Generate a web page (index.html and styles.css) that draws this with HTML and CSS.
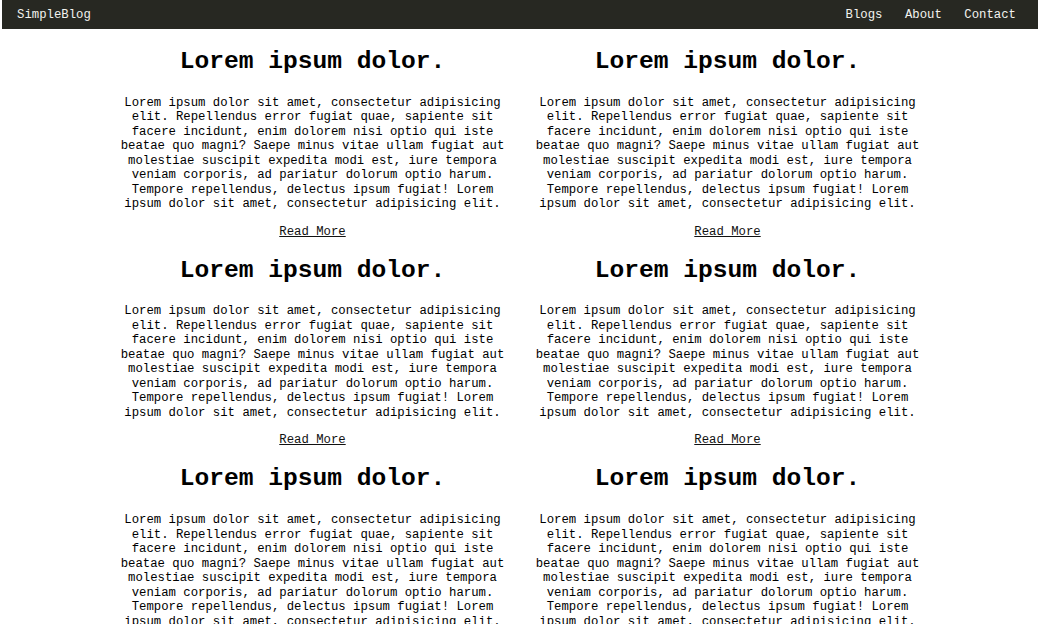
FILE: index.html
```html
<!DOCTYPE html>
<html lang="en">
<head>
<meta charset="utf-8">
<title>SimpleBlog</title>
<link rel="stylesheet" href="styles.css">
</head>
<body>
<nav class="navbar">
  <a class="brand" href="#">SimpleBlog</a>
  <ul class="nav-links">
    <li><a href="#">Blogs</a></li>
    <li><a href="#">About</a></li>
    <li><a href="#">Contact</a></li>
  </ul>
</nav>
<main class="posts">
  <article class="post">
    <h2 class="post-title">Lorem ipsum dolor.</h2>
    <p class="post-text">Lorem ipsum dolor sit amet, consectetur adipisicing elit. Repellendus error fugiat quae, sapiente sit facere incidunt, enim dolorem nisi optio qui iste beatae quo magni? Saepe minus vitae ullam fugiat aut molestiae suscipit expedita modi est, iure tempora veniam corporis, ad pariatur dolorum optio harum. Tempore repellendus, delectus ipsum fugiat! Lorem ipsum dolor sit amet, consectetur adipisicing elit.</p>
    <a class="read-more" href="#">Read More</a>
  </article>
  <article class="post">
    <h2 class="post-title">Lorem ipsum dolor.</h2>
    <p class="post-text">Lorem ipsum dolor sit amet, consectetur adipisicing elit. Repellendus error fugiat quae, sapiente sit facere incidunt, enim dolorem nisi optio qui iste beatae quo magni? Saepe minus vitae ullam fugiat aut molestiae suscipit expedita modi est, iure tempora veniam corporis, ad pariatur dolorum optio harum. Tempore repellendus, delectus ipsum fugiat! Lorem ipsum dolor sit amet, consectetur adipisicing elit.</p>
    <a class="read-more" href="#">Read More</a>
  </article>
  <article class="post">
    <h2 class="post-title">Lorem ipsum dolor.</h2>
    <p class="post-text">Lorem ipsum dolor sit amet, consectetur adipisicing elit. Repellendus error fugiat quae, sapiente sit facere incidunt, enim dolorem nisi optio qui iste beatae quo magni? Saepe minus vitae ullam fugiat aut molestiae suscipit expedita modi est, iure tempora veniam corporis, ad pariatur dolorum optio harum. Tempore repellendus, delectus ipsum fugiat! Lorem ipsum dolor sit amet, consectetur adipisicing elit.</p>
    <a class="read-more" href="#">Read More</a>
  </article>
  <article class="post">
    <h2 class="post-title">Lorem ipsum dolor.</h2>
    <p class="post-text">Lorem ipsum dolor sit amet, consectetur adipisicing elit. Repellendus error fugiat quae, sapiente sit facere incidunt, enim dolorem nisi optio qui iste beatae quo magni? Saepe minus vitae ullam fugiat aut molestiae suscipit expedita modi est, iure tempora veniam corporis, ad pariatur dolorum optio harum. Tempore repellendus, delectus ipsum fugiat! Lorem ipsum dolor sit amet, consectetur adipisicing elit.</p>
    <a class="read-more" href="#">Read More</a>
  </article>
  <article class="post">
    <h2 class="post-title">Lorem ipsum dolor.</h2>
    <p class="post-text">Lorem ipsum dolor sit amet, consectetur adipisicing elit. Repellendus error fugiat quae, sapiente sit facere incidunt, enim dolorem nisi optio qui iste beatae quo magni? Saepe minus vitae ullam fugiat aut molestiae suscipit expedita modi est, iure tempora veniam corporis, ad pariatur dolorum optio harum. Tempore repellendus, delectus ipsum fugiat! Lorem ipsum dolor sit amet, consectetur adipisicing elit.</p>
    <a class="read-more" href="#">Read More</a>
  </article>
  <article class="post">
    <h2 class="post-title">Lorem ipsum dolor.</h2>
    <p class="post-text">Lorem ipsum dolor sit amet, consectetur adipisicing elit. Repellendus error fugiat quae, sapiente sit facere incidunt, enim dolorem nisi optio qui iste beatae quo magni? Saepe minus vitae ullam fugiat aut molestiae suscipit expedita modi est, iure tempora veniam corporis, ad pariatur dolorum optio harum. Tempore repellendus, delectus ipsum fugiat! Lorem ipsum dolor sit amet, consectetur adipisicing elit.</p>
    <a class="read-more" href="#">Read More</a>
  </article>
</main>
</body>
</html>
```
FILE: styles.css
```css
* {
  box-sizing: border-box;
}

html, body {
  margin: 0;
  padding: 0;
  background: #ffffff;
}

body {
  padding-left: 2px;
  font-family: "Liberation Mono", "Courier New", monospace;
  font-size: 12.3px;
  color: #000000;
  overflow: hidden;
}

.navbar {
  height: 29px;
  background: #272822;
  display: flex;
  align-items: center;
  justify-content: space-between;
  padding: 0 22px 0 15px;
}

.navbar a {
  color: #f2f2ee;
  text-decoration: none;
}

.nav-links {
  list-style: none;
  margin: 0;
  padding: 0;
  display: flex;
  gap: 22.5px;
}

.posts {
  display: grid;
  grid-template-columns: repeat(2, 390px);
  column-gap: 25px;
  justify-content: center;
  padding-top: 1.25px;
}

.post {
  text-align: center;
  padding-top: 17.5px;
}

.post-title {
  margin: 0 0 19.75px;
  font-size: 24.6px;
  line-height: 28px;
  font-weight: bold;
}

.post-text {
  margin: 0 0 13px;
  line-height: 14.5px;
}

.read-more {
  display: inline-block;
  line-height: 14.5px;
  color: #111111;
  text-decoration: underline;
}
```
